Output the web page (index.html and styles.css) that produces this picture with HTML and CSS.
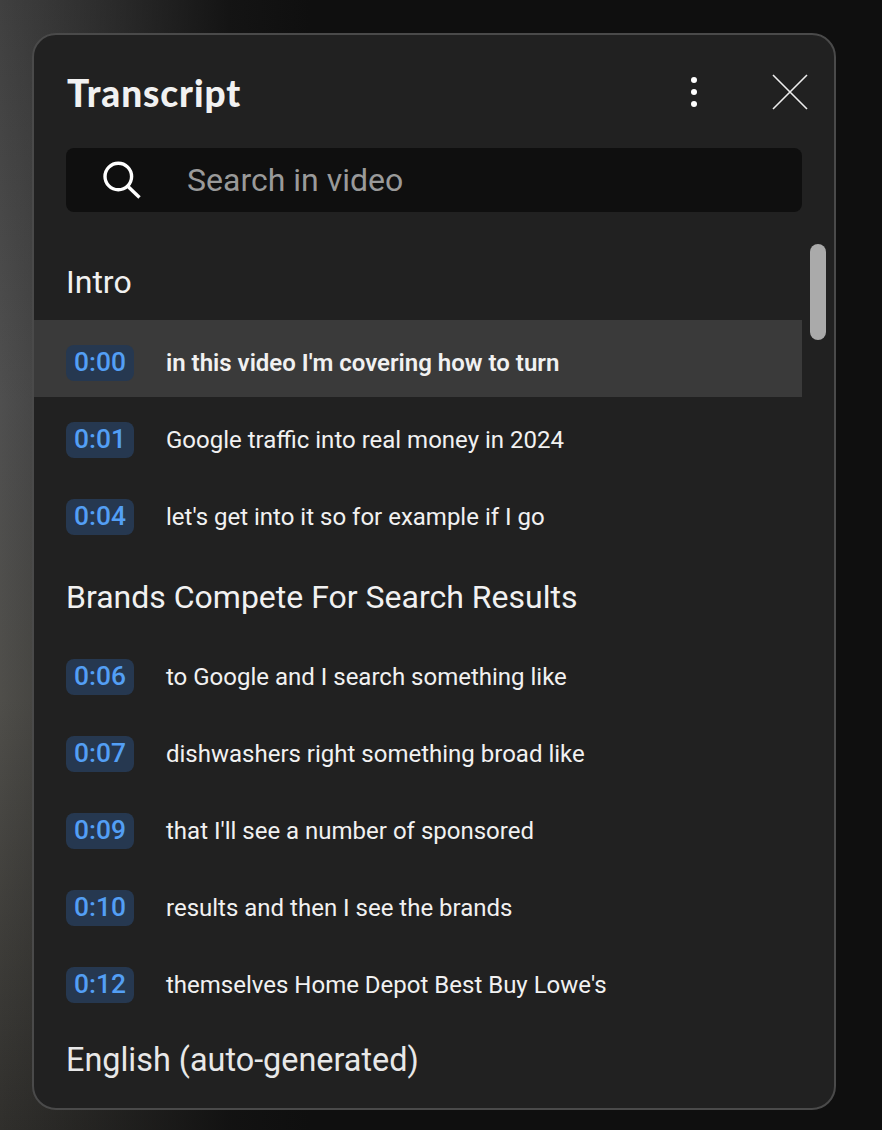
FILE: index.html
```html
<!DOCTYPE html>
<html lang="en">
<head>
<meta charset="utf-8">
<title>Transcript</title>
<link rel="stylesheet" href="styles.css">
</head>
<body>
<main class="panel">
  <header class="head">
    <h1 class="title">Transcript</h1>
    <button class="menu" aria-label="More"><svg width="8" height="32" viewBox="0 0 8 32"><circle cx="4" cy="4" r="3"/><circle cx="4" cy="16" r="3"/><circle cx="4" cy="28" r="3"/></svg></button>
    <button class="close" aria-label="Close"><svg width="36" height="36" viewBox="0 0 36 36"><path d="M1 1 35 35M35 1 1 35"/></svg></button>
  </header>
  <div class="search">
    <svg class="search-icon" width="42" height="42" viewBox="0 0 42 42"><circle cx="16.300" cy="18.500" r="13.300"/><path d="M25.500 28 37.500 39.500"/></svg>
    <span class="placeholder">Search in video</span>
  </div>
  <div class="list">
    <h2 class="section first">Intro</h2>
    <div class="row active"><span class="chip">0:00</span><span class="line">in this video I'm covering how to turn</span></div>
    <div class="row"><span class="chip">0:01</span><span class="line">Google traffic into real money in 2024</span></div>
    <div class="row"><span class="chip">0:04</span><span class="line">let's get into it so for example if I go</span></div>
    <h2 class="section">Brands Compete For Search Results</h2>
    <div class="row"><span class="chip">0:06</span><span class="line">to Google and I search something like</span></div>
    <div class="row"><span class="chip">0:07</span><span class="line">dishwashers right something broad like</span></div>
    <div class="row"><span class="chip">0:09</span><span class="line">that I'll see a number of sponsored</span></div>
    <div class="row"><span class="chip">0:10</span><span class="line">results and then I see the brands</span></div>
    <div class="row"><span class="chip">0:12</span><span class="line">themselves Home Depot Best Buy Lowe's</span></div>
    <div class="thumb"></div>
  </div>
  <footer class="foot">English (auto-generated)</footer>
</main>
</body>
</html>
```
FILE: styles.css
```css
* { box-sizing: border-box; }
html, body { margin: 0; height: 100%; }
body {
  height: 1130px;
  overflow: hidden;
  padding: 33px 0 0 32px;
  background:
    linear-gradient(90deg, rgba(15,15,15,0) 0, rgba(15,15,15,.9) 230px, #0f0f0f 310px),
    linear-gradient(180deg, #404040 0, #4f4f4f 400px, #4f4e4a 700px, #302f2c 1130px);
  font-family: Roboto, "Liberation Sans", sans-serif;
  color: #f1f1f1;
}
.panel {
  width: 804px;
  height: 1077px;
  background: #212121;
  border: 2px solid #4a4a4a;
  border-radius: 24px;
  overflow: hidden;
}
.head {
  display: flex;
  align-items: center;
  height: 113px;
  padding: 1px 26px 0 32px;
}
.title {
  margin: 0 auto 0 0;
  padding: 2px 0 0 1px;
  font: 900 37px/44px Lato, "Noto Sans", sans-serif;
  letter-spacing: .9px;
  color: #f1f1f1;
}
.menu, .close {
  display: flex;
  padding: 0;
  border: 0;
  background: none;
}
.menu { margin-right: 74px; fill: #fff; }
.close { stroke: #eee; stroke-width: 1.6; fill: none; }
.search {
  display: flex;
  align-items: center;
  width: 736px;
  height: 64px;
  margin-left: 32px;
  background: #0f0f0f;
  border-radius: 8px;
  padding-left: 36px;
}
.search-icon { fill: none; stroke: #fff; stroke-width: 3.4; flex: none; margin-top: -2px; }
.placeholder { margin-left: 43px; font-size: 32px; color: #9a9a9a; }
.list { position: relative; width: 768px; }
.section {
  margin: 0;
  height: 83px;
  padding: 24px 0 0 32px;
  font-size: 32px;
  font-weight: 400;
  line-height: 44px;
  color: #f1f1f1;
}
.section.first { height: 108px; padding-top: 48px; }
.row {
  display: flex;
  align-items: flex-start;
  height: 77px;
  padding: 25px 0 0 32px;
}
.row.active { background: #3a3a3a; }
.row.active .line { font-weight: 600; }
.chip {
  width: 68px;
  height: 36px;
  flex: none;
  background: #263850;
  border-radius: 8px;
  color: #539ff5;
  font-size: 26.400px;
  font-weight: 500;
  line-height: 34px;
  text-align: center;
}
.line {
  margin-left: 32px;
  font-size: 24px;
  line-height: 36px;
  color: #f1f1f1;
}
.thumb {
  position: absolute;
  left: 776px;
  top: 32px;
  width: 16px;
  height: 96px;
  border-radius: 8px;
  background: #aaa;
}
.foot {
  padding: 19px 0 0 32px;
  font-size: 32.4px;
  line-height: 44px;
  color: #e8e8e8;
}
```
